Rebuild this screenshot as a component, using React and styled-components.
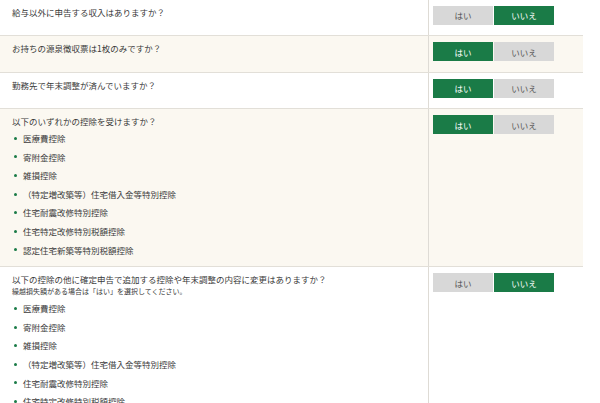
import React from 'react';
import styled, { createGlobalStyle } from 'styled-components';

const GlobalStyle = createGlobalStyle`
  html, body {
    margin: 0;
    padding: 0;
    background: #ffffff;
  }
  body {
    font-family: "Noto Sans CJK JP", "Noto Sans", sans-serif;
    color: #3a3a3a;
    overflow: hidden;
  }
`;

const QUESTIONS = [
  { text: '給与以外に申告する収入はありますか？', answer: 'no' },
  { text: 'お持ちの源泉徴収票は1枚のみですか？', answer: 'yes' },
  { text: '勤務先で年末調整が済んでいますか？', answer: 'yes' },
  {
    text: '以下のいずれかの控除を受けますか？',
    answer: 'yes',
    items: [
      '医療費控除',
      '寄附金控除',
      '雑損控除',
      '（特定増改築等）住宅借入金等特別控除',
      '住宅耐震改修特別控除',
      '住宅特定改修特別税額控除',
      '認定住宅新築等特別税額控除',
    ],
  },
  {
    text: '以下の控除の他に確定申告で追加する控除や年末調整の内容に変更はありますか？',
    note: '繰越損失額がある場合は「はい」を選択してください。',
    answer: 'no',
    items: [
      '医療費控除',
      '寄附金控除',
      '雑損控除',
      '（特定増改築等）住宅借入金等特別控除',
      '住宅耐震改修特別控除',
      '住宅特定改修特別税額控除',
    ],
  },
];

function App() {
  return (
    <>
      <GlobalStyle />
      <Table>
        {QUESTIONS.map((q, i) => (
          <Row key={i} $shaded={i % 2 === 1} $first={i === 0} $tall={!!q.items}>
            <QuestionCell>
              <Question>{q.text}</Question>
              {q.note && <Note>{q.note}</Note>}
              {q.items && (
                <List>
                  {q.items.map((item) => (
                    <Item key={item}>{item}</Item>
                  ))}
                </List>
              )}
            </QuestionCell>
            <AnswerCell>
              <Toggle>
                <ToggleButton $active={q.answer === 'yes'}>はい</ToggleButton>
                <ToggleButton $active={q.answer === 'no'}>いいえ</ToggleButton>
              </Toggle>
            </AnswerCell>
          </Row>
        ))}
      </Table>
    </>
  );
}

const Table = styled.div`
  width: 583px;
  display: flex;
  flex-direction: column;
`;

const Row = styled.div`
  display: grid;
  grid-template-columns: 428px 1fr;
  box-sizing: border-box;
  min-height: 36.5px;
  margin-top: ${(p) => (p.$first ? '-0.5px' : '0')};
  background: ${(p) => (p.$shaded ? '#fbf8f1' : '#ffffff')};
  border-bottom: 1px solid #e2dfd8;
`;

const QuestionCell = styled.div`
  padding: 6px 0 7px 12px;
`;

const Question = styled.div`
  font-size: 8.5px;
  line-height: 12px;
  white-space: nowrap;
`;

const Note = styled.div`
  font-size: 7px;
  line-height: 12px;
  margin-bottom: 1px;
  white-space: nowrap;
`;

const List = styled.ul`
  list-style: none;
  margin: 2px 0 0;
  padding: 0;
`;

const Item = styled.li`
  display: flex;
  align-items: center;
  gap: 6px;
  font-size: 8.5px;
  line-height: 18.6px;
  padding-left: 2px;
  white-space: nowrap;

  &::before {
    content: '';
    width: 3px;
    height: 3px;
    border-radius: 50%;
    background: #1a7b47;
    flex: none;
  }
`;

const AnswerCell = styled.div`
  border-left: 1px solid #dedbd5;
  padding: 6px 0 0 4px;
`;

const Toggle = styled.div`
  display: flex;
  gap: 1px;
`;

const ToggleButton = styled.div`
  width: 60px;
  height: 19px;
  display: flex;
  align-items: center;
  justify-content: center;
  font-size: 8.5px;
  background: ${(p) => (p.$active ? '#1a7b47' : '#d8d8d8')};
  color: ${(p) => (p.$active ? '#ffffff' : '#555555')};
`;

export default App;
